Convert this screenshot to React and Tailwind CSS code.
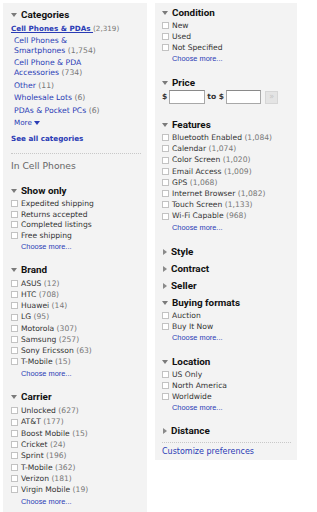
import React from "react";

const BODY = "font-['DejaVu_Sans',sans-serif]";

function Down() {
  return (
    <svg width="6" height="4" viewBox="0 0 6 4" className="shrink-0">
      <polygon points="0,0 6,0 3,4" fill="#7a7a7a" />
    </svg>
  );
}
function Right() {
  return (
    <svg width="4" height="6" viewBox="0 0 4 6" className="shrink-0 ml-[1px]">
      <polygon points="0,0 4,3 0,6" fill="#8a8a8a" />
    </svg>
  );
}

function Heading({ title, open = true }) {
  return (
    <div className="flex items-center h-[14px]">
      {open ? <Down /> : <Right />}
      <span
        className={
          "font-['Roboto',sans-serif] font-bold text-[9.9px] leading-[14px] text-[#111] " +
          (open ? "ml-[4px]" : "ml-[4px]")
        }
      >
        {title}
      </span>
    </div>
  );
}

function Check({ label, count, row }) {
  return (
    <div className={"flex items-center " + row}>
      <span className="w-[7px] h-[7px] border border-[#c2c2c2] bg-white shrink-0" />
      <span className={BODY + " ml-[3px] text-[7.6px] text-[#333] whitespace-nowrap"}>
        {label}
        {count && <span className="text-[#777]"> ({count})</span>}
      </span>
    </div>
  );
}

function ChooseMore({ row }) {
  return (
    <div className={"flex items-center pl-[10px] " + row}>
      <span className="font-['Liberation_Sans',sans-serif] text-[7.4px] text-[#2a3bb5] whitespace-nowrap">
        Choose more...
      </span>
    </div>
  );
}

function Section({ title, items, row = "h-[11px]", first = "mt-[0.5px]", className = "" }) {
  return (
    <div className={className}>
      <Heading title={title} />
      <div className={first}>
        {items.map(([l, c]) => (
          <Check key={l} label={l} count={c} row={row} />
        ))}
        <ChooseMore row={row} />
      </div>
    </div>
  );
}

function SubCat({ a, b, count, className = "" }) {
  return (
    <div className={BODY + " text-[7.7px] leading-[10px] text-[#2a3bb5] " + className}>
      {b ? (
        <>
          <div>{a}</div>
          <div>
            {b} <span className="text-[#777]">({count})</span>
          </div>
        </>
      ) : (
        <div>
          {a} <span className="text-[#777]">({count})</span>
        </div>
      )}
    </div>
  );
}

export default function App() {
  return (
    <div className="w-[317px] h-[512px] bg-white overflow-hidden flex items-start pt-[3px] pl-[3px] gap-[8px]">
      {/* Left panel */}
      <div className="w-[144px] h-[509px] bg-[#f3f3f3] pl-[8px] pr-[6px] pt-[4.5px]">
        <Heading title="Categories" />
        <div className="mt-[2px] h-[11px] flex items-center">
          <span className={BODY + " font-bold text-[7.2px] text-[#2a3bb5] underline whitespace-nowrap"}>
            Cell Phones &amp; PDAs <span className="font-normal no-underline text-[#777] inline-block">(2,319)</span>
          </span>
        </div>
        <div className="pl-[3px] mt-[1px]">
          <SubCat a="Cell Phones &" b="Smartphones" count="1,754" />
          <SubCat a="Cell Phone & PDA" b="Accessories" count="734" className="mt-[2.5px]" />
          <SubCat a="Other" count="11" className="mt-[2.5px]" />
          <SubCat a="Wholesale Lots" count="6" className="mt-[2.5px]" />
          <SubCat a="PDAs & Pocket PCs" count="6" className="mt-[2.5px]" />
          <div className={BODY + " mt-[2.5px] text-[7.2px] leading-[10px] text-[#2a3bb5] flex items-center"}>
            More
            <svg width="6" height="4" viewBox="0 0 6 4" className="ml-[2px]">
              <polygon points="0,0 6,0 3,4" fill="#2a3bb5" />
            </svg>
          </div>
        </div>
        <div className={BODY + " mt-[6px] h-[11px] flex items-center font-bold text-[7.2px] text-[#2a3bb5]"}>
          See all categories
        </div>
        <div className="mt-[8px] border-t border-dotted border-[#c8c8c8]" />
        <div className={BODY + " mt-[5.5px] h-[12px] flex items-center text-[9.2px] text-[#666]"}>
          In Cell Phones
        </div>

        <Section
          className="mt-[12.5px]"
          title="Show only"
          row="h-[10.6px]"
          items={[
            ["Expedited shipping"],
            ["Returns accepted"],
            ["Completed listings"],
            ["Free shipping"],
          ]}
        />
        <Section
          className="mt-[11.5px]"
          title="Brand"
          row="h-[11.2px]"
          first="mt-[1px]"
          items={[
            ["ASUS", "12"],
            ["HTC", "708"],
            ["Huawei", "14"],
            ["LG", "95"],
            ["Motorola", "307"],
            ["Samsung", "257"],
            ["Sony Ericsson", "63"],
            ["T-Mobile", "15"],
          ]}
        />
        <Section
          className="mt-[11.5px]"
          title="Carrier"
          row="h-[11.3px]"
          first="mt-[1px]"
          items={[
            ["Unlocked", "627"],
            ["AT&T", "177"],
            ["Boost Mobile", "15"],
            ["Cricket", "24"],
            ["Sprint", "196"],
            ["T-Mobile", "362"],
            ["Verizon", "181"],
            ["Virgin Mobile", "19"],
          ]}
        />
      </div>

      {/* Right panel */}
      <div className="w-[142px] h-[457px] bg-[#f3f3f3] pl-[7px] pr-[6px] pt-[3px]">
        <Section
          title="Condition"
          row="h-[10.8px]"
          items={[["New"], ["Used"], ["Not Specified"]]}
        />
        <div className="mt-[12px]">
          <Heading title="Price" />
          <div className={BODY + " flex items-center h-[14px] mt-[0.5px] text-[7.6px] text-[#333]"}>
            <span className="font-bold">$</span>
            <div className="ml-[2px] w-[36px] h-[14px] bg-white border border-[#a8a8a8] border-t-[#8a8a8a]" />
            <span className="ml-[2px] font-bold">to $</span>
            <div className="ml-[2px] w-[35px] h-[14px] bg-white border border-[#a8a8a8] border-t-[#8a8a8a]" />
            <div className="ml-[4px] w-[13px] h-[13px] bg-[#e4e4e4] border border-[#d6d6d6] flex items-center justify-center text-[8px] leading-none text-[#c4c4c4]">
              »
            </div>
          </div>
        </div>
        <Section
          className="mt-[13.5px]"
          title="Features"
          row="h-[11.2px]"
          items={[
            ["Bluetooth Enabled", "1,084"],
            ["Calendar", "1,074"],
            ["Color Screen", "1,020"],
            ["Email Access", "1,009"],
            ["GPS", "1,068"],
            ["Internet Browser", "1,082"],
            ["Touch Screen", "1,133"],
            ["Wi-Fi Capable", "968"],
          ]}
        />
        <div className="mt-[12.5px]">
          <Heading title="Style" open={false} />
          <div className="mt-[3px]">
            <Heading title="Contract" open={false} />
          </div>
          <div className="mt-[3px]">
            <Heading title="Seller" open={false} />
          </div>
        </div>
        <Section
          className="mt-[3px]"
          title="Buying formats"
          row="h-[11px]"
          first="mt-[0px]"
          items={[["Auction"], ["Buy It Now"]]}
        />
        <Section
          className="mt-[11.5px]"
          title="Location"
          row="h-[11px]"
          first="mt-[0px]"
          items={[["US Only"], ["North America"], ["Worldwide"]]}
        />
        <div className="mt-[11.5px]">
          <Heading title="Distance" open={false} />
        </div>
        <div className="mt-[4px] border-t border-dotted border-[#c8c8c8]" />
        <div className={BODY + " mt-[3px] h-[11px] flex items-center text-[8px] text-[#2a3bb5] whitespace-nowrap"}>
          Customize preferences
        </div>
      </div>
    </div>
  );
}
